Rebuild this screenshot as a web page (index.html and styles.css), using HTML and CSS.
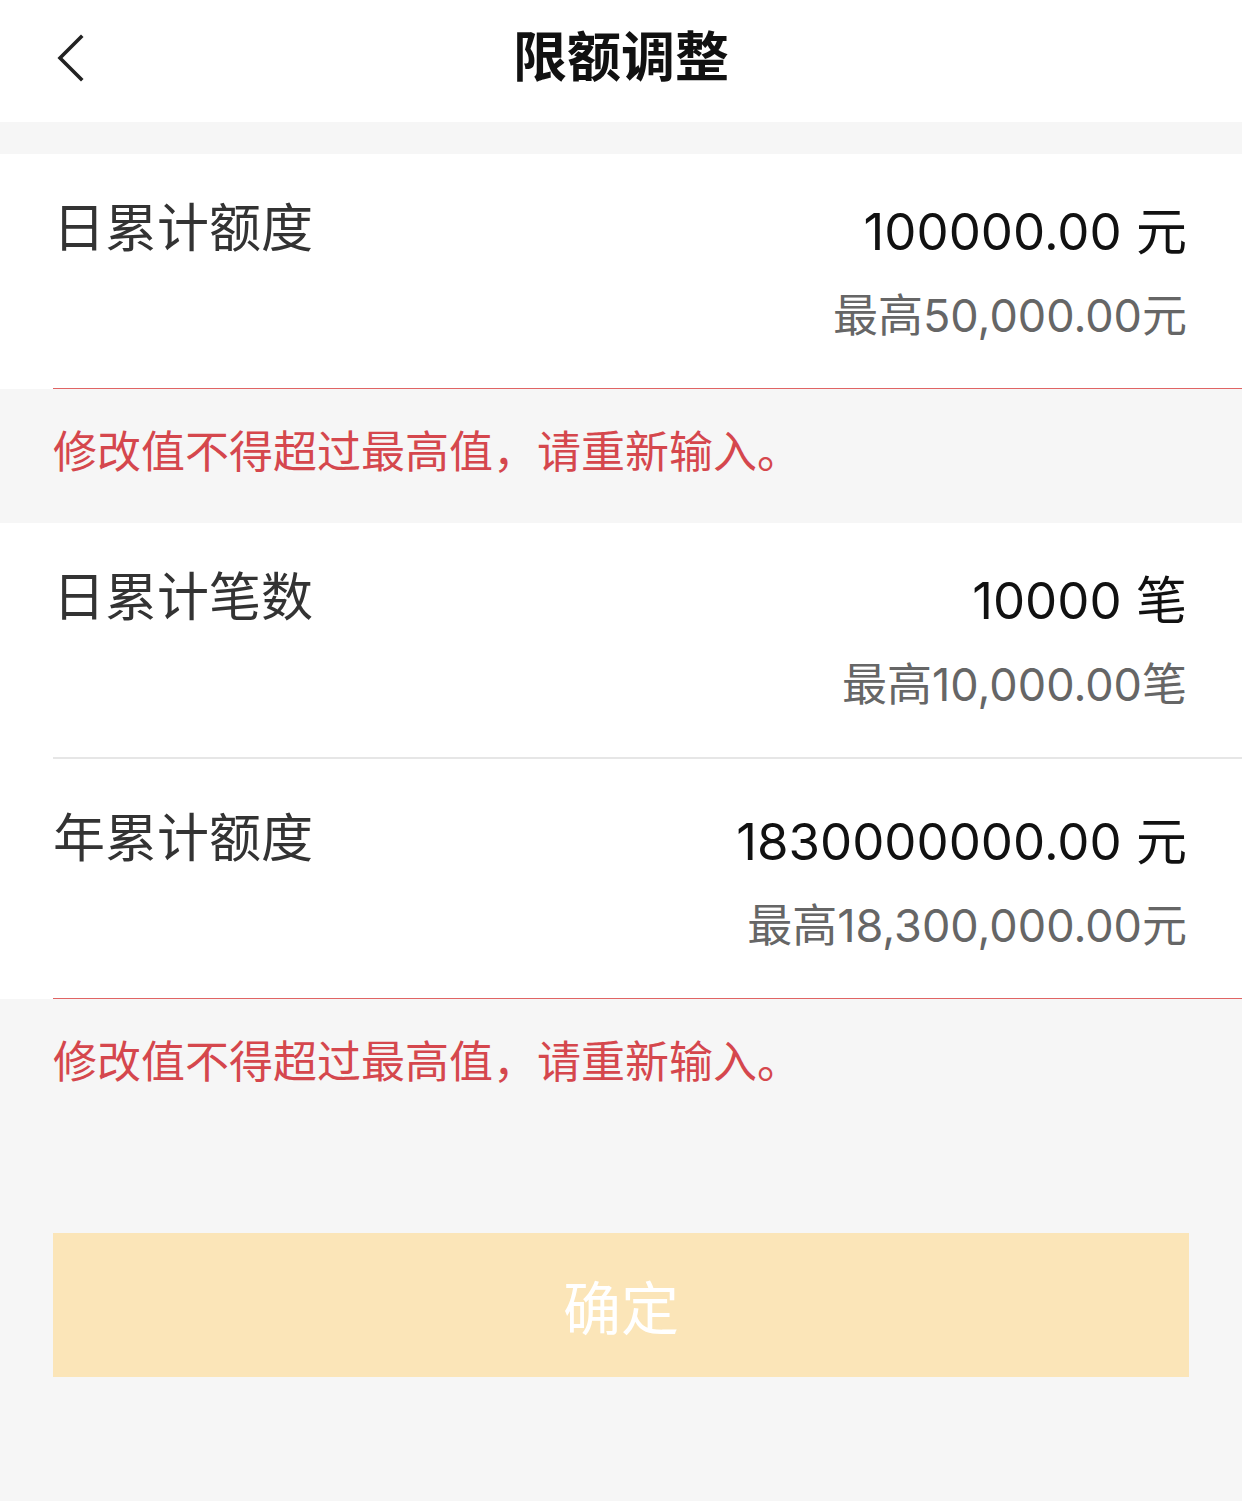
FILE: index.html
```html
<!DOCTYPE html>
<html lang="zh-CN">

<head>
    <meta charset="UTF-8">
    <meta name="viewport" content="width=device-width, initial-scale=1.0">
    <title>限额调整</title>
    <link rel="stylesheet" href="styles.css">
</head>

<body>

    <header class="nav-bar">
        <a class="nav-back" href="#">
            <svg width="30" height="48" viewBox="0 0 30 48">
                <polyline points="25,3 4,24 25,45" fill="none" stroke="#222" stroke-width="3.6" stroke-linecap="square" />
            </svg>
        </a>
        <h1 class="nav-title">限额调整</h1>
        <span></span>
    </header>

    <section class="card">
        <div class="limit-row is-error">
            <span class="limit-label">日累计额度</span>
            <div class="limit-value">
                <span class="value-main">100000.00 元</span>
                <span class="value-max">最高50,000.00元</span>
            </div>
        </div>
    </section>

    <p class="error-tip">修改值不得超过最高值，请重新输入。</p>

    <section class="card">
        <div class="limit-row">
            <span class="limit-label">日累计笔数</span>
            <div class="limit-value">
                <span class="value-main">10000 笔</span>
                <span class="value-max">最高10,000.00笔</span>
            </div>
        </div>
        <div class="limit-row limit-row-last is-error">
            <span class="limit-label">年累计额度</span>
            <div class="limit-value">
                <span class="value-main">1830000000.00 元</span>
                <span class="value-max">最高18,300,000.00元</span>
            </div>
        </div>
    </section>

    <p class="error-tip">修改值不得超过最高值，请重新输入。</p>

    <button class="confirm-btn" disabled>确定</button>

</body>

</html>
```

FILE: styles.css
```css
body {
    margin: 0;
    padding: 0;
    background-color: #f6f6f6;
    font-family: Inter, "Noto Sans CJK SC", sans-serif;
    color: #111;
}

.nav-bar {
    height: 122px;
    background-color: #fff;
    display: grid;
    grid-template-columns: 1fr auto 1fr;
    align-items: center;
    margin-bottom: 32px;
}

.nav-back {
    display: flex;
    padding-left: 56px;
    padding-bottom: 6px;
}

.nav-title {
    margin: 0;
    padding-bottom: 15px;
    font-family: "Noto Sans CJK SC", sans-serif;
    font-size: 54px;
    font-weight: 700;
    color: #111;
}

.card {
    background-color: #fff;
}

.limit-row {
    display: flex;
    justify-content: space-between;
    align-items: flex-start;
    margin-left: 53px;
    padding: 36px 55px 30px 0;
    border-bottom: 2px solid #e6e6e6;
}

.limit-row-last {
    padding-top: 41px;
}

.limit-row.is-error {
    border-bottom: 1px solid #e06464;
}

.limit-label {
    font-family: "Noto Sans CJK SC", sans-serif;
    font-size: 52px;
    line-height: 70px;
    color: #333;
}

.limit-value {
    display: flex;
    flex-direction: column;
    align-items: flex-end;
}

.value-main {
    font-size: 51px;
    line-height: 84px;
    color: #111;
}

.value-max {
    font-size: 45px;
    line-height: 84px;
    color: #666;
}

.error-tip {
    margin: 0;
    padding: 30px 53px 44px;
    font-family: "Noto Sans CJK SC", sans-serif;
    font-size: 44px;
    line-height: 60px;
    color: #d5474d;
}

.confirm-btn {
    display: block;
    width: calc(100% - 106px);
    height: 144px;
    margin: 100px 53px 0;
    border: none;
    border-radius: 0;
    background-color: #fbe5b8;
    color: #fff;
    font-family: "Noto Sans CJK SC", sans-serif;
    font-size: 58px;
}
```
